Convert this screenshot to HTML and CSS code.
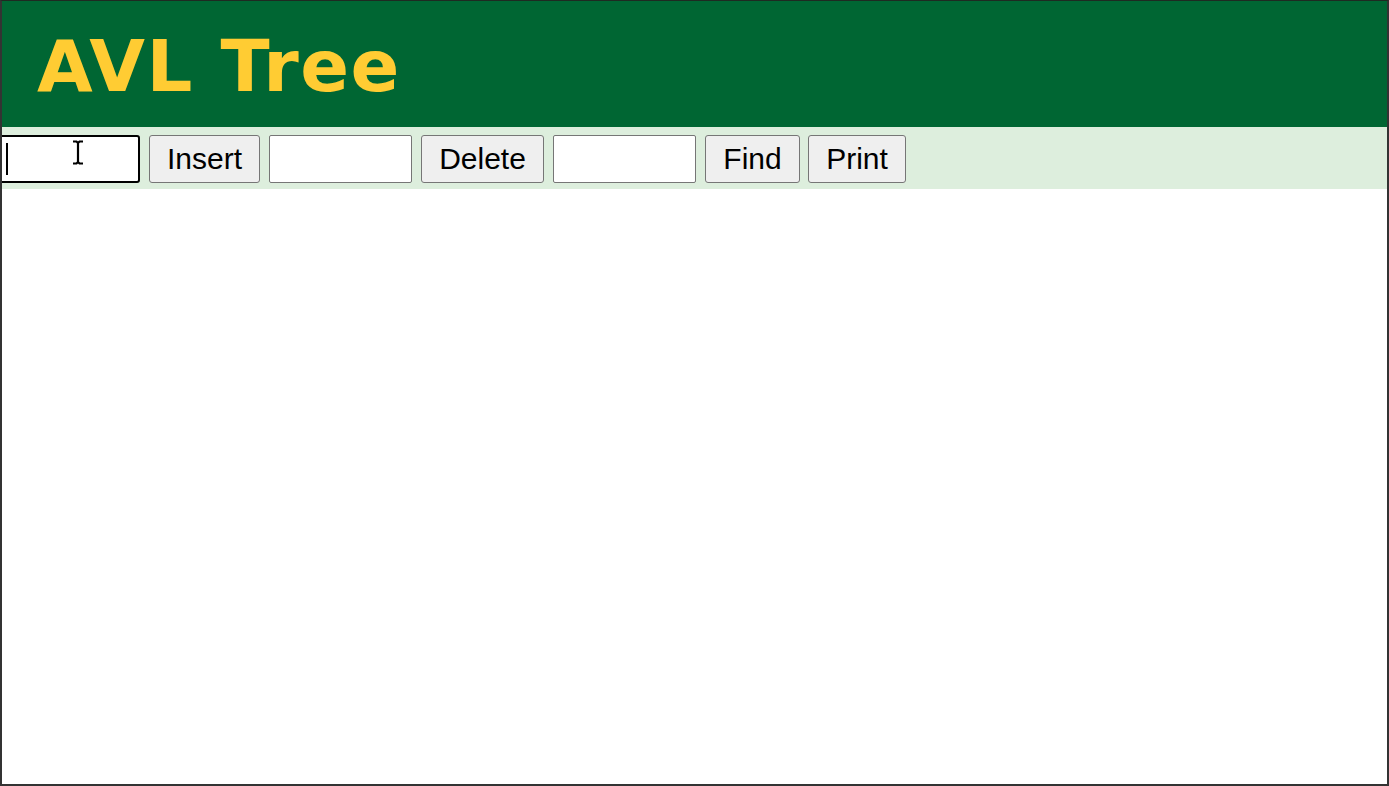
FILE: index.html
```html
<!DOCTYPE html>
<html lang="en">
<head>
<meta charset="utf-8">
<title>AVL Tree</title>
<link rel="stylesheet" href="styles.css">
</head>
<body>
<div class="page">
  <header class="banner">
    <h1 class="title">AVL Tree</h1>
  </header>
  <div class="toolbar">
    <div class="field-wrap">
      <input class="field field-focus" type="text">
      <span class="caret"></span>
      <svg class="ibeam" width="14" height="25" viewBox="0 0 14 25"><path d="M2 1.5h3.5l1.5 1.5 1.5-1.5H12M7 3v19M2 23.5h3.5L7 22l1.5 1.5H12" fill="none" stroke="#000" stroke-width="2.2"/></svg>
    </div>
    <button class="btn btn-insert">Insert</button>
    <input class="field" type="text">
    <button class="btn btn-delete">Delete</button>
    <input class="field" type="text">
    <button class="btn btn-find">Find</button>
    <button class="btn btn-print">Print</button>
  </div>
  <main class="canvas"></main>
  <div class="window-edge"></div>
</div>
</body>
</html>
```
FILE: styles.css
```css
html, body {
  margin: 0;
  padding: 0;
  background: #ffffff;
}
.page {
  position: relative;
  width: 1389px;
  height: 786px;
  display: flex;
  flex-direction: column;
  overflow: hidden;
}
.window-edge {
  position: absolute;
  inset: 0;
  box-sizing: border-box;
  border-top: 1px solid #1e2a22;
  border-left: 2px solid #333333;
  border-right: 2px solid #333333;
  border-bottom: 2px solid #333333;
  pointer-events: none;
}
.banner {
  background: #006633;
  height: 127px;
  flex: none;
  display: flex;
  align-items: center;
  padding-left: 37px;
}
.title {
  margin: 0;
  font-family: "DejaVu Sans", Verdana, sans-serif;
  font-weight: bold;
  font-size: 72px;
  color: #ffcc33;
  letter-spacing: 1.5px;
  line-height: 1;
  padding-top: 4px;
}
.toolbar {
  background: #ddeedd;
  height: 62px;
  flex: none;
  box-sizing: border-box;
  padding-top: 8px;
  display: flex;
  align-items: flex-start;
}
.field-wrap {
  position: relative;
  margin-left: -3px;
  margin-right: 9px;
}
.field {
  box-sizing: border-box;
  width: 143px;
  height: 48px;
  border: 1px solid #767676;
  border-radius: 2px;
  background: #ffffff;
  margin: 0 9px 0 0;
  padding: 0 4px;
  font-family: "Liberation Sans", Arial, sans-serif;
  font-size: 30px;
  outline: none;
}
.field-focus {
  margin: 0;
  border: 2px solid #000000;
  border-radius: 3px;
}
.caret {
  position: absolute;
  left: 9px;
  top: 8px;
  width: 2px;
  height: 32px;
  background: #000000;
}
.ibeam {
  position: absolute;
  left: 74px;
  top: 5px;
}
.btn {
  box-sizing: border-box;
  height: 48px;
  border: 1px solid #767676;
  border-radius: 3px;
  background: #efefef;
  color: #000000;
  font-family: "Liberation Sans", Arial, sans-serif;
  font-size: 30px;
  padding: 0;
  margin: 0 9px 0 0;
  line-height: 1;
}
.btn-insert { width: 111px; }
.btn-delete { width: 123px; }
.btn-find { width: 95px; margin-right: 8px; }
.btn-print { width: 98px; }
.canvas {
  flex: 1;
  background: #ffffff;
}
```
